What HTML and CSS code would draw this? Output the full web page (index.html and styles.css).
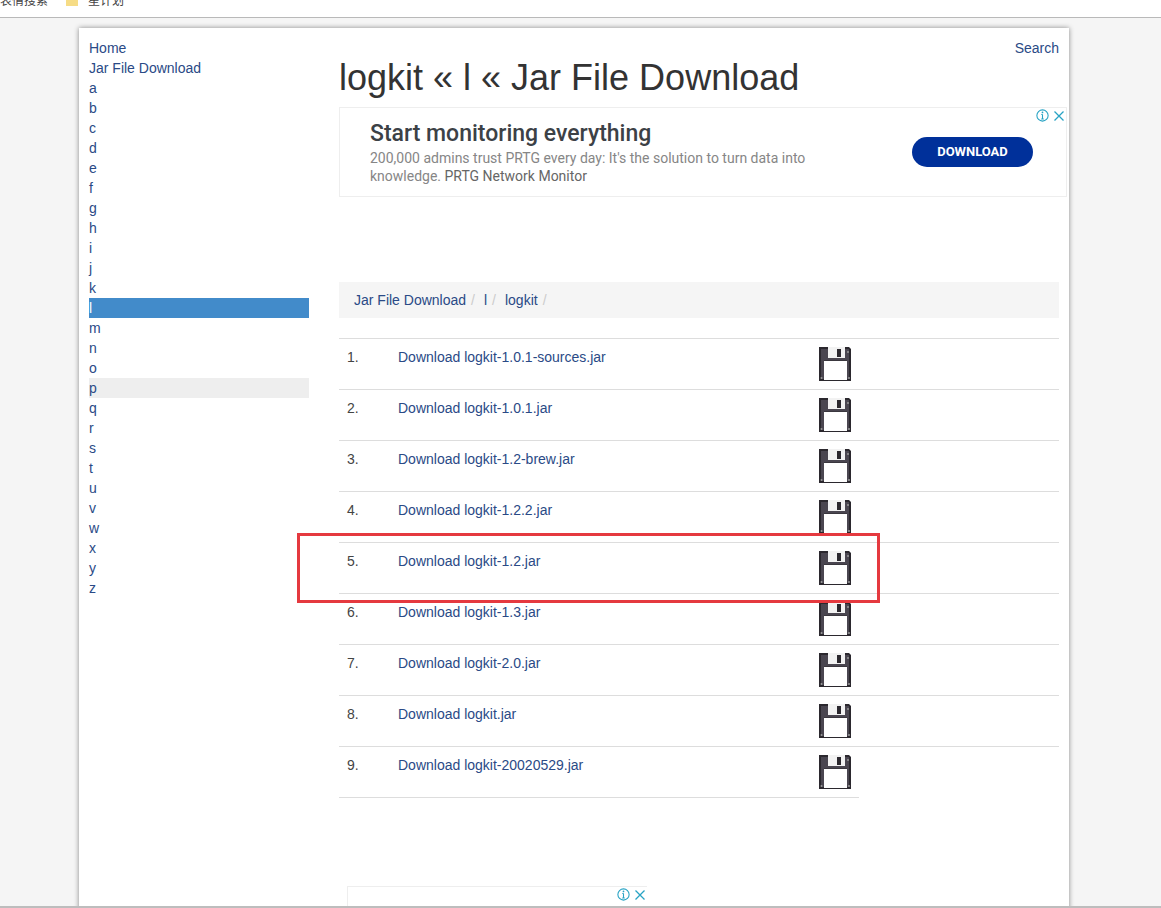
FILE: index.html
```html
<!DOCTYPE html>
<html lang="en">
<head>
  <meta charset="UTF-8">
  <title>logkit « l « Jar File Download</title>
  <link rel="stylesheet" href="styles.css">
</head>
<body>
  <svg class="defs" width="0" height="0">
    <symbol id="floppy" viewBox="0 0 32 34">
      <path d="M0 0H30L32 2V34H0Z" fill="#2b282e"/>
      <path d="M2 2H30V32H2Z" fill="#4a4650"/>
      <path d="M9 0H26V11H9Z" fill="#f2f2f2"/>
      <path d="M18 2H22V10H18Z" fill="#2b282e"/>
      <path d="M5 13H28V33H5Z" fill="#3a373e"/>
      <path d="M5 14H28V33H5Z" fill="#fff"/>
      <circle cx="2.500" cy="31" r="1" fill="#999"/>
      <circle cx="30" cy="31" r="1" fill="#999"/>
      <circle cx="29" cy="5" r="1" fill="#999"/>
    </symbol>
    <symbol id="adinfo" viewBox="0 0 12 12">
      <circle cx="6" cy="6" r="5.2" fill="none" stroke="#28a3c4" stroke-width="1"/>
      <path d="M6 5V9.2M4.8 9.2H7.2M4.9 5H6" fill="none" stroke="#28a3c4" stroke-width="1"/>
      <circle cx="6" cy="3.2" r=".8" fill="#28a3c4"/>
    </symbol>
    <symbol id="adclose" viewBox="0 0 12 12">
      <path d="M1.5 1.5L10.5 10.5M10.5 1.5L1.5 10.5" fill="none" stroke="#28a3c4" stroke-width="1.3"/>
    </symbol>
  </svg>

  <div class="topbar">
    <span>表情搜索</span>
    <svg class="folder" viewBox="0 0 12 10" width="12" height="10"><path d="M0 0H5L6 1.500H12V10H0Z" fill="#f6dc86"/></svg>
    <span>星计划</span>
  </div>

  <div class="page">
    <div class="sheet">
      <nav class="sidebar">
        <a href="#">Home</a>
        <a href="#">Jar File Download</a>
        <a href="#">a</a>
        <a href="#">b</a>
        <a href="#">c</a>
        <a href="#">d</a>
        <a href="#">e</a>
        <a href="#">f</a>
        <a href="#">g</a>
        <a href="#">h</a>
        <a href="#">i</a>
        <a href="#">j</a>
        <a href="#">k</a>
        <a href="#" class="active">l</a>
        <a href="#">m</a>
        <a href="#">n</a>
        <a href="#">o</a>
        <a href="#" class="hover">p</a>
        <a href="#">q</a>
        <a href="#">r</a>
        <a href="#">s</a>
        <a href="#">t</a>
        <a href="#">u</a>
        <a href="#">v</a>
        <a href="#">w</a>
        <a href="#">x</a>
        <a href="#">y</a>
        <a href="#">z</a>
      </nav>

      <main class="content">
        <div class="searchrow"><a href="#">Search</a></div>
        <h1>logkit « l « Jar File Download</h1>

        <div class="ad">
          <div class="adbtns">
            <svg width="13" height="13"><use href="#adinfo"/></svg>
            <svg width="12" height="12"><use href="#adclose"/></svg>
          </div>
          <div class="adtext">
            <div class="adtitle">Start monitoring everything</div>
            <div class="adbody">200,000 admins trust PRTG every day: It's the solution to turn data into knowledge. <span class="adbrand">PRTG Network Monitor</span></div>
          </div>
          <a href="#" class="adbutton">DOWNLOAD</a>
        </div>

        <div class="breadcrumb">
          <a href="#">Jar File Download</a><span class="sep">/</span>
          <a href="#">l</a><span class="sep">/</span>
          <a href="#">logkit</a><span class="sep">/</span>
        </div>

        <div class="files">
          <div class="file"><span>1.</span><a href="#">Download logkit-1.0.1-sources.jar</a><svg class="disk"><use href="#floppy"/></svg></div>
          <div class="file"><span>2.</span><a href="#">Download logkit-1.0.1.jar</a><svg class="disk"><use href="#floppy"/></svg></div>
          <div class="file"><span>3.</span><a href="#">Download logkit-1.2-brew.jar</a><svg class="disk"><use href="#floppy"/></svg></div>
          <div class="file"><span>4.</span><a href="#">Download logkit-1.2.2.jar</a><svg class="disk"><use href="#floppy"/></svg></div>
          <div class="file"><span>5.</span><a href="#">Download logkit-1.2.jar</a><svg class="disk"><use href="#floppy"/></svg></div>
          <div class="file"><span>6.</span><a href="#">Download logkit-1.3.jar</a><svg class="disk"><use href="#floppy"/></svg></div>
          <div class="file"><span>7.</span><a href="#">Download logkit-2.0.jar</a><svg class="disk"><use href="#floppy"/></svg></div>
          <div class="file"><span>8.</span><a href="#">Download logkit.jar</a><svg class="disk"><use href="#floppy"/></svg></div>
          <div class="file"><span>9.</span><a href="#">Download logkit-20020529.jar</a><svg class="disk"><use href="#floppy"/></svg></div>
        </div>
        <div class="filesend"></div>

        <div class="ad2">
          <div class="adbtns">
            <svg width="13" height="13"><use href="#adinfo"/></svg>
            <svg width="12" height="12"><use href="#adclose"/></svg>
          </div>
        </div>
      </main>
    </div>
  </div>

  <div class="mark"></div>
</body>
</html>
```

FILE: styles.css
```css
html, body {
  height: 100%;
}

body {
  display: flex;
  flex-direction: column;
  height: 908px;
  margin: 0;
  overflow: hidden;
  position: relative;
  background-color: #f5f5f5;
  font-family: "Liberation Sans", Arial, sans-serif;
  font-size: 14px;
  line-height: 20px;
  color: #444;
}

a {
  color: #2a4a86;
  text-decoration: none;
}

.defs {
  position: absolute;
}

.topbar {
  display: flex;
  flex: none;
  align-items: flex-start;
  height: 17px;
  border-bottom: 1px solid #b9b9b9;
  overflow: hidden;
  background-color: #fff;
  font-family: "Noto Sans CJK SC", sans-serif;
  font-size: 12px;
  line-height: 16px;
  color: #444;
}

.topbar span {
  margin-top: -8px;
}

.folder {
  margin: -4px 10px 0 18px;
}

.page {
  flex: 1;
  min-height: 0;
  padding: 10px 0 0 79px;
  overflow: hidden;
  border-bottom: 2px solid #bdbdbd;
}

.sheet {
  display: flex;
  gap: 30px;
  box-sizing: border-box;
  width: 990px;
  height: 900px;
  padding: 10px;
  background-color: #fff;
  box-shadow: 0 0 5px rgba(0, 0, 0, 0.45);
}

.sidebar {
  display: flex;
  flex: none;
  flex-direction: column;
  width: 220px;
}

.sidebar a {
  display: block;
  height: 20px;
}

.sidebar .active {
  background-color: #428bca;
  color: #fff;
}

.sidebar .hover {
  background-color: #eee;
}

.content {
  width: 720px;
}

.searchrow {
  text-align: right;
}

h1 {
  margin: 0 0 9px;
  font-size: 36px;
  font-weight: 500;
  line-height: 40px;
  color: #333;
}

.ad {
  display: flex;
  position: relative;
  align-items: center;
  box-sizing: border-box;
  width: 728px;
  height: 90px;
  padding: 0 33px 0 30px;
  border: 1px solid #eee;
  font-family: Roboto, sans-serif;
}

.adbtns {
  display: flex;
  position: absolute;
  top: 1px;
  right: 1px;
  align-items: center;
  gap: 4px;
}

.adtext {
  width: 455px;
  margin-top: -1px;
}

.adtitle {
  font-size: 23px;
  font-weight: 500;
  line-height: 30px;
  color: #3c4146;
}

.adbody {
  font-size: 14px;
  line-height: 18px;
  color: #868686;
}

.adbrand {
  color: #666;
}

.adbutton {
  flex: none;
  width: 121px;
  height: 30px;
  margin-left: auto;
  border-radius: 15px;
  background-color: #00309a;
  color: #fff;
  font-size: 13px;
  font-weight: 700;
  line-height: 30px;
  text-align: center;
}

.breadcrumb {
  display: flex;
  align-items: center;
  height: 36px;
  margin-top: 85px;
  padding: 0 15px;
  background-color: #f5f5f5;
}

.sep {
  margin: 0 9px 0 5px;
  color: #ccc;
}

.files {
  margin-top: 20px;
}

.file {
  display: grid;
  grid-template-columns: 51px 420px 49px;
  box-sizing: border-box;
  height: 51px;
  padding-top: 8px;
  border-top: 1px solid #ddd;
}

.file span {
  padding-left: 8px;
}

.file a {
  padding-left: 8px;
}

.disk {
  width: 32px;
  height: 34px;
  margin-left: 9px;
}

.filesend {
  width: 520px;
  border-top: 1px solid #ddd;
}

.ad2 {
  position: relative;
  box-sizing: border-box;
  width: 300px;
  height: 30px;
  margin: 88px 0 0 8px;
  border-top: 1px solid #eee;
  border-left: 1px solid #eee;
}

.ad2 .adbtns {
  top: 1px;
}

.mark {
  position: absolute;
  top: 533px;
  left: 297px;
  box-sizing: border-box;
  width: 583px;
  height: 70px;
  border: 3px solid #e5393f;
}
```
